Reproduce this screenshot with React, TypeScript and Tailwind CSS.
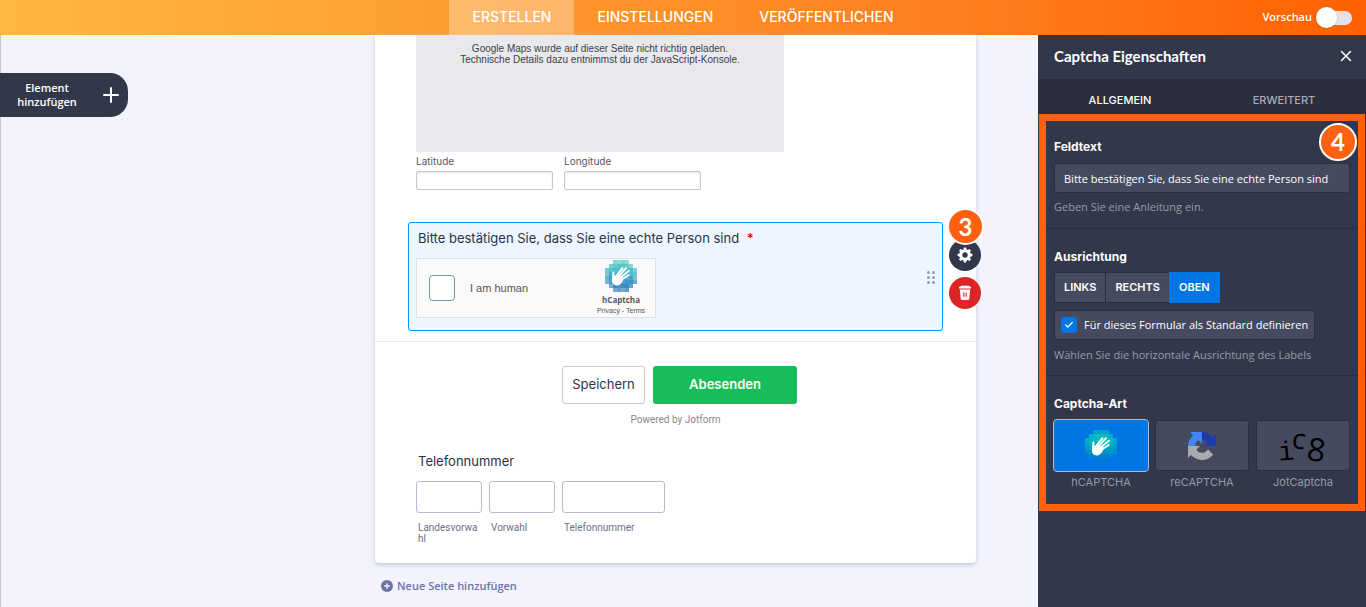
import { useState } from "react";
import { Plus, X, Check } from "lucide-react";

const NAV = ["ERSTELLEN", "EINSTELLUNGEN", "VERÖFFENTLICHEN"];
const ALIGNMENTS = ["LINKS", "RECHTS", "OBEN"];

// first and last filled column of each row in the pixel disc
const DISC = [
  [2, 5],
  [1, 6],
  [0, 7],
  [0, 7],
  [0, 7],
  [0, 7],
  [1, 6],
  [2, 5],
];

function HandLogo({ colors }: { colors: string[] }) {
  return (
    <svg viewBox="0 0 32 32" className="size-8" aria-hidden="true">
      <g shapeRendering="crispEdges">
        {DISC.map(([from, to], row) =>
          Array.from({ length: to - from + 1 }, (_, i) => {
            const col = from + i;
            const edge = col === from || col === to || row === 0 || row === 7;
            return (
              <rect
                key={`${row}-${col}`}
                x={col * 4}
                y={row * 4}
                width="4"
                height="4"
                fill={colors[row]}
                opacity={edge ? ((row + col) % 2 ? 0.7 : 0.8) : (row + col) % 3 === 0 ? 0.92 : 1}
              />
            );
          })
        )}
      </g>
      <g stroke="#fff" strokeLinecap="round" strokeLinejoin="round" fill="none" strokeWidth="2">
        <path d="M11 16.500 17.400 8.200" />
        <path d="M13 17 21 8.200" />
        <path d="M15 18 24 10.800" />
        <path d="M16 20 23.800 15" />
        <path d="M8.400 18.500 8.400 12.600" />
      </g>
      <path
        fill="#fff"
        d="M7.300 14.500c1.600.6 2.200 1.600 2.800 1.200L12 14l6.800 3.600-.8 3c-1 2.600-3.200 4.600-5.900 4.900-3.200.2-5.200-2.200-5.200-5.200z"
      />
    </svg>
  );
}

function RecaptchaLogo() {
  return (
    <svg viewBox="0 0 64 64" className="size-7" aria-hidden="true">
      <path
        fill="#1c3aa9"
        d="M64 31.955l-.033-1.37V4.687l-7.16 7.16C50.948 4.674 42.033.093 32.05.093c-10.4 0-19.622 4.96-25.458 12.64l11.736 11.86a15.55 15.55 0 0 1 4.754-5.334c2.05-1.6 4.952-2.906 8.968-2.906.485 0 .86.057 1.135.163 4.976.393 9.288 3.14 11.828 7.124l-8.307 8.307L64 31.953"
      />
      <path
        fill="#4285f4"
        d="M31.862.094l-1.37.033H4.594l7.16 7.16C4.58 13.147 0 22.06 0 32.046c0 10.4 4.96 19.622 12.64 25.458L24.5 45.768a15.55 15.55 0 0 1-5.334-4.754c-1.6-2.05-2.906-4.952-2.906-8.968 0-.485.057-.86.163-1.135.393-4.976 3.14-9.288 7.124-11.828l8.307 8.307L31.86.095"
      />
      <path
        fill="#ababab"
        d="M.001 32.045l.033 1.37v25.898l7.16-7.16c5.86 7.173 14.774 11.754 24.76 11.754 10.4 0 19.622-4.96 25.458-12.64l-11.736-11.86a15.55 15.55 0 0 1-4.754 5.334c-2.05 1.6-4.952 2.906-8.968 2.906-.485 0-.86-.057-1.135-.163-4.976-.393-9.288-3.14-11.828-7.124l8.307-8.307c-10.522.04-22.4.066-27.295-.005"
      />
    </svg>
  );
}

function JotCaptchaLogo() {
  return (
    <svg viewBox="0 0 60 48" className="h-12 w-[60px] overflow-visible" aria-hidden="true">
      <text x="5" y="38" fontSize="27" fontFamily="Liberation Mono, monospace" transform="rotate(-5 13 29)">
        i
      </text>
      <text x="19" y="27" fontSize="28" fontFamily="Open Sans, sans-serif" transform="rotate(8 27 19)">
        c
      </text>
      <text x="34" y="39" fontSize="32" fontFamily="Open Sans, sans-serif" transform="rotate(8 43 29)">
        8
      </text>
    </svg>
  );
}

function GearIcon() {
  return (
    <svg viewBox="0 0 16 16" className="size-4" aria-hidden="true">
      <g fill="#fff">
        {[0, 45, 90, 135].map((angle) => (
          <path key={angle} d="M6.3 2.5 7 .6h2l.7 1.9v11L9 15.4H7l-.7-1.9z" transform={`rotate(${angle} 8 8)`} />
        ))}
        <circle cx="8" cy="8" r="5.7" />
      </g>
      <circle cx="8" cy="8" r="2.7" fill="#33374a" />
    </svg>
  );
}

function TrashIcon() {
  return (
    <svg viewBox="0 0 16 16" className="size-4" aria-hidden="true">
      <path
        fill="#fff"
        fillRule="evenodd"
        d="M4 .8h8l.6 1H14v1.800H2V1.800h1.400zM2.800 4.600h10.400l-.9 9.200a1.500 1.500 0 0 1-1.500 1.300H5.200a1.500 1.500 0 0 1-1.500-1.300zM6.200 7.500v4.300h1.200V7.500zm2.400 0v4.300h1.200V7.500z"
      />
    </svg>
  );
}

function Header() {
  return (
    <header className="grid h-[35px] shrink-0 grid-cols-[1fr_auto_1fr] bg-gradient-to-r from-[#ffb83f] to-[#ff6100] text-white">
      <span />
      <nav className="flex">
        {NAV.map((item, i) => (
          <a
            key={item}
            href="#"
            className={`flex items-center px-[23px] pb-[2px] text-[14px] font-medium ${i === 0 ? "bg-white/30" : ""}`}
          >
            {item}
          </a>
        ))}
      </nav>
      <label className="flex items-center justify-end gap-1 pr-[14px] font-['Open_Sans',sans-serif] text-[11px] font-semibold">
        Vorschau
        <span className="relative flex h-[21px] w-9 items-center">
          <input type="checkbox" role="switch" className="ml-1 h-[14px] w-8 appearance-none rounded-full bg-[#e3e4ea]" />
          <span className="pointer-events-none absolute left-0 size-[21px] rounded-full bg-white shadow" />
        </span>
      </label>
    </header>
  );
}

function CaptchaField() {
  return (
    <div className="relative mx-[33px] mt-8 h-[109px] rounded-[3px] border border-[#0099ff] bg-[#edf5ff] px-[7px] pt-[6px]">
      <p className="pl-[2px] text-[13px] leading-[18px] text-[#2c3345]">
        Bitte bestätigen Sie, dass Sie eine echte Person sind <span className="ml-1 font-semibold text-[#f00]">*</span>
      </p>
      <div className="mt-[11px] flex h-[60px] w-60 items-center justify-between border border-[#e0e0e0] bg-[#fafafa] pl-3">
        <label className="flex items-center gap-[15px] font-['Liberation_Sans',Arial,sans-serif] text-[11px] text-[#555]">
          <input type="checkbox" className="size-[26px] appearance-none rounded border border-[#6ba0a8] bg-white" />
          I am human
        </label>
        <div className="flex w-[68px] flex-col items-center">
          <HandLogo colors={["#5fd0c4", "#55c8c5", "#4bbfc6", "#44b2c6", "#3fa5c5", "#3f98c4", "#3f8cc4", "#4385c4"]} />
          <span className="mt-[3px] font-['Open_Sans',sans-serif] text-[8px] leading-[10px] font-bold text-[#555564]">
            hCaptcha
          </span>
          <span className="font-['Liberation_Sans',Arial,sans-serif] text-[7px] leading-[12px] text-[#555]">
            <a href="#">Privacy</a> - <a href="#">Terms</a>
          </span>
        </div>
      </div>
      <div className="absolute top-12 right-[7px] grid grid-cols-2 gap-[2px]">
        {Array.from({ length: 6 }, (_, i) => (
          <span key={i} className="size-[3px] rounded-full bg-[#979db5]" />
        ))}
      </div>
      <div className="absolute top-4 -right-[39px] flex flex-col gap-[6px]">
        <button aria-label="Eigenschaften" className="flex size-8 items-center justify-center rounded-full bg-[#33374a]">
          <GearIcon />
        </button>
        <button aria-label="Löschen" className="flex size-8 items-center justify-center rounded-full bg-[#dc2626]">
          <TrashIcon />
        </button>
      </div>
      <span className="absolute -top-[15px] -right-[42px] flex size-[37px] items-center justify-center rounded-full border-2 border-white bg-[#ff6110] font-['Lato',sans-serif] text-[24px] font-bold text-white">
        3
      </span>
    </div>
  );
}

function FormCard() {
  return (
    <div className="rounded-b bg-white pb-[19px] shadow-[0_2px_4px_#c5c8dc]">
      <div className="ml-[41px] h-[117px] w-[368px] bg-[#e8e9ed] pt-2 text-center font-['Liberation_Sans',Arial,sans-serif] text-[10px] leading-[11px] text-[#3c3f44]">
        <p>Google Maps wurde auf dieser Seite nicht richtig geladen.</p>
        <p>Technische Details dazu entnimmst du der JavaScript-Konsole.</p>
      </div>
      <div className="mt-[2px] ml-[41px] flex gap-[11px] text-[10px] leading-[14px] text-[#57595f]">
        {["Latitude", "Longitude"].map((name) => (
          <label key={name} className="w-[137px]">
            {name}
            <input className="mt-[3px] block h-[19px] w-full rounded-[2px] border border-[#c8c8c8] bg-white px-1 shadow-[inset_0_1px_2px_#e4e4e4]" />
          </label>
        ))}
      </div>

      <CaptchaField />

      <div className="mt-[10px] border-t border-[#e3e5f2] pt-6">
        <div className="flex justify-center text-[13px]">
          <button className="ml-2 h-[38px] w-[83px] rounded-[3px] border border-[#c3cad8] text-[#2c3345]">Speichern</button>
          <button className="ml-2 h-[38px] w-36 rounded-[3px] bg-[#18bd5b] font-semibold text-white">Abesenden</button>
        </div>
        <p className="mt-[9px] text-center font-['Roboto',sans-serif] text-[10px] leading-[14px] text-[#86888f]">
          Powered by Jotform
        </p>
      </div>

      <fieldset className="mt-[25px] ml-[41px]">
        <legend className="pl-[2px] text-[13px] leading-[18px] text-[#2c3345]">Telefonnummer</legend>
        <div className="mt-[11px] flex gap-[7px] font-['Roboto',sans-serif] text-[10px] leading-[11px] text-[#6b7086]">
          <label className="w-[66px]">
            <input className="mb-[9px] block h-8 w-full rounded-[3px] border border-[#b8bbcd] px-2" />
            <span className="block px-[2px] break-all">Landesvorwahl</span>
          </label>
          <label className="w-[66px]">
            <input className="mb-[9px] block h-8 w-full rounded-[3px] border border-[#b8bbcd] px-2" />
            <span className="block px-[2px]">Vorwahl</span>
          </label>
          <label className="w-[103px]">
            <input className="mb-[9px] block h-8 w-full rounded-[3px] border border-[#b8bbcd] px-2" />
            <span className="block px-[2px]">Telefonnummer</span>
          </label>
        </div>
      </fieldset>
    </div>
  );
}

function CaptchaTile({ label, active, children }: { label: string; active?: boolean; children: React.ReactNode }) {
  return (
    <div className="flex flex-1 flex-col items-center font-['Inter',sans-serif] text-[11px] leading-[14px] text-[#979aa8]">
      <button
        aria-label={label}
        className={`flex h-[51px] w-full items-center justify-center rounded-[3px] border ${
          active ? "border-[#0075e3] bg-[#0075e3] outline outline-[#b5bdd0]" : "border-[#2b2e3d] bg-[#454a5f]"
        }`}
      >
        {children}
      </button>
      <span className="mt-1">{label}</span>
    </div>
  );
}

function PropertiesPanel() {
  const [align, setAlign] = useState("OBEN");

  return (
    <aside className="w-[328px] shrink-0 bg-[#33374a] font-['Open_Sans',sans-serif] text-[11px] text-white">
      <div className="flex h-11 items-center justify-between pr-[11px] pb-[2px] pl-4">
        <h2 className="font-['Lato',sans-serif] text-[15px] font-bold">Captcha Eigenschaften</h2>
        <button aria-label="Schließen">
          <X className="size-[18px]" />
        </button>
      </div>
      <div className="grid h-[35px] grid-cols-2 bg-[#2b2e3d] pt-2 font-['Inter',sans-serif] font-medium">
        <button>ALLGEMEIN</button>
        <button className="text-[#a9acb9]">ERWEITERT</button>
      </div>

      <div className="relative">
        <section className="border-b border-[#2b2e3d] px-4 pt-6 pb-[14px]">
          <label htmlFor="feldtext" className="block font-['Inter',sans-serif] text-[12px] leading-[18px] font-bold">
            Feldtext
          </label>
          <input
            id="feldtext"
            defaultValue="Bitte bestätigen Sie, dass Sie eine echte Person sind"
            className="mt-[7px] h-[30px] w-full rounded-[3px] border border-[#2b2e3d] bg-[#454a5f] px-[9px] font-medium"
          />
          <p className="mt-[7px] leading-[14px] text-[#979aa8]">Geben Sie eine Anleitung ein.</p>
        </section>

        <section className="border-b border-[#2b2e3d] px-4 pt-[19px] pb-[13px]">
          <h3 className="font-['Inter',sans-serif] text-[12px] leading-[18px] font-bold">Ausrichtung</h3>
          <div className="mt-[6px] flex font-['Inter',sans-serif]">
            {ALIGNMENTS.map((item) => (
              <button
                key={item}
                onClick={() => setAlign(item)}
                className={`-mr-px h-[31px] border px-[9px] font-semibold ${
                  align === item ? "border-[#0075e3] bg-[#0075e3]" : "border-[#2b2e3d] bg-[#454a5f]"
                }`}
              >
                {item}
              </button>
            ))}
          </div>
          <label className="mt-[7px] inline-flex h-[30px] items-center gap-[7px] rounded-[3px] border border-[#2b2e3d] bg-[#454a5f] px-[6px] font-medium">
            <span className="relative flex size-4">
              <input type="checkbox" defaultChecked className="size-4 appearance-none rounded-[3px] bg-[#0075e3]" />
              <Check className="pointer-events-none absolute top-[3px] left-[3px] size-[10px]" strokeWidth={3} />
            </span>
            Für dieses Formular als Standard definieren
          </label>
          <p className="mt-[8px] leading-[14px] text-[#979aa8]">Wählen Sie die horizontale Ausrichtung des Labels</p>
        </section>

        <section className="px-4 pt-[19px] pb-[22px]">
          <h3 className="font-['Inter',sans-serif] text-[12px] leading-[18px] font-bold">Captcha-Art</h3>
          <div className="mt-[7px] flex gap-[7px]">
            <CaptchaTile label="hCAPTCHA" active>
              <HandLogo colors={["#00b5c0", "#00c0bd", "#00bfbd", "#00b0bf", "#00a2c4", "#0095c9", "#0085cf", "#0078d6"]} />
            </CaptchaTile>
            <CaptchaTile label="reCAPTCHA">
              <RecaptchaLogo />
            </CaptchaTile>
            <CaptchaTile label="JotCaptcha">
              <JotCaptchaLogo />
            </CaptchaTile>
          </div>
        </section>

        {/* callout frame over the settings */}
        <div className="pointer-events-none absolute inset-x-px inset-y-0 border-[7px] border-[#ff6110]" />
        <span className="absolute top-[9px] right-[9px] flex size-[38px] items-center justify-center rounded-full border-2 border-white bg-[#ff6110] font-['Lato',sans-serif] text-[24px] font-bold">
          4
        </span>
      </div>
    </aside>
  );
}

export default function App() {
  return (
    <div className="flex min-h-screen flex-col bg-[#f3f3fe] font-['Inter','Liberation_Sans',sans-serif]">
      <Header />
      <div className="flex flex-1">
        <div className="flex flex-1 border-l border-[#c3c3d1]">
          <div className="-ml-px pt-[38px]">
            <button className="flex h-11 w-32 items-center justify-between rounded-r-[18px] bg-[#33374a] pr-[5px] pl-[17px] font-['Open_Sans',sans-serif] text-[11px] leading-[14px] font-semibold text-white">
              <span className="w-[60px]">Element hinzufügen</span>
              <Plus className="size-6" strokeWidth={2} />
            </button>
          </div>
          <main className="mr-[62px] ml-auto w-[601px]">
            <FormCard />
            <button className="mt-4 ml-[6px] flex items-center gap-1 font-['Open_Sans',sans-serif] text-[11px] leading-[14px] font-semibold text-[#6c73a8]">
              <span className="flex size-3 items-center justify-center rounded-full bg-[#6c73a8] text-[#f3f3fe]">
                <Plus className="size-2" strokeWidth={4} />
              </span>
              Neue Seite hinzufügen
            </button>
          </main>
        </div>
        <PropertiesPanel />
      </div>
    </div>
  );
}
